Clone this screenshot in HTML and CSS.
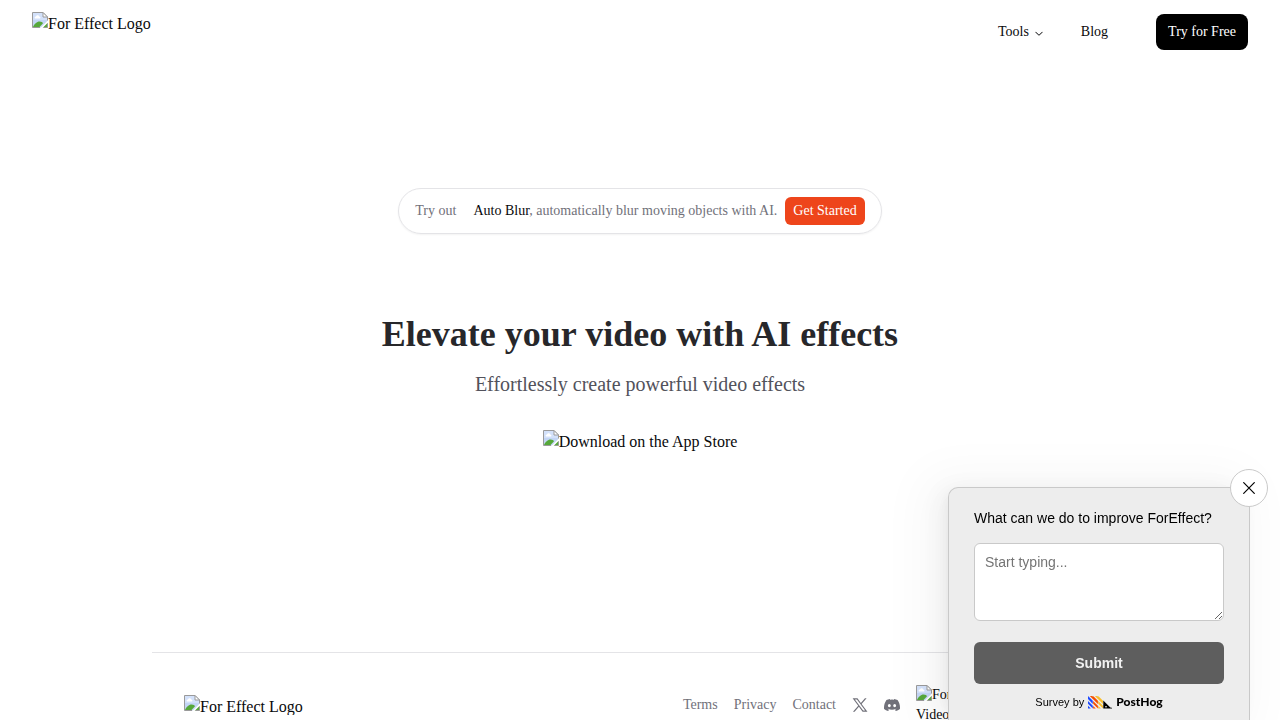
FILE: index.html
```html
<!DOCTYPE html>
<html lang="en">
<head>
<meta charset="utf-8">
<meta name="viewport" content="width=device-width, initial-scale=1">
<title>For Effect</title>
<link rel="stylesheet" href="styles.css">
</head>
<body>
<svg class="defs" width="0" height="0" aria-hidden="true">
  <symbol id="image-icon" viewBox="0 0 16 16">
    <path d="M.5 .5H11l4.500 4.500V9L9 15.500H.5z" fill="#c3d5f5"/>
    <path d="M1 1h10v4h4v3H1z" fill="#d3e1fa"/>
    <path d="M3 6.500c-1-1 0-2.300 1-2 .5-1.600 2.800-1.500 3.200 0 1.300 0 1.600 1.400.8 2z" fill="#fff"/>
    <path d="M1 15c1-3 4-5.500 6.500-5.500 2 0 3 .8 3.500 1.800L7.500 15z" fill="#56a83a"/>
    <path d="M10 15.500 15.500 10v5.500z" fill="#56a83a"/>
    <path d="M8.500 16 16 8.500v2L10.500 16z" fill="#fff"/>
    <path d="M8 15.500H.5V.5H11l4.500 4.500v3.500M15.500 11.500v4h-4" fill="none" stroke="#9a9a9a"/>
    <path d="M11 .5V5h4.500z" fill="#fff" stroke="#9a9a9a"/>
  </symbol>
</svg>
<div class="page">
  <header class="header">
    <a class="picture header-logo" href="#"><svg class="picture-icon"><use href="#image-icon"/></svg>For Effect Logo</a>
    <nav class="nav">
      <button class="nav-item" type="button">Tools
        <svg class="chevron" viewBox="0 0 15 15" fill="currentColor" aria-hidden="true"><path d="M3.135 6.158a.5.5 0 0 1 .707-.023L7.500 9.565l3.658-3.430a.5.5 0 0 1 .684.730l-4 3.750a.5.5 0 0 1-.684 0l-4-3.750a.5.5 0 0 1-.023-.707z"/></svg>
      </button>
      <a class="nav-item" href="#">Blog</a>
      <a class="try" href="#">Try for Free</a>
    </nav>
  </header>
  <main class="hero">
    <div class="promo">
      <span class="promo-lead">Try out</span>
      <span class="promo-text"><strong>Auto Blur</strong>, automatically blur moving objects with AI.</span>
      <a class="promo-button" href="#">Get Started</a>
    </div>
    <h1 class="title">Elevate your video with AI effects</h1>
    <p class="subtitle">Effortlessly create powerful video effects</p>
    <a class="picture" href="#"><svg class="picture-icon"><use href="#image-icon"/></svg>Download on the App Store</a>
  </main>
  <footer class="footer">
    <a class="picture footer-logo" href="#"><svg class="picture-icon"><use href="#image-icon"/></svg>For Effect Logo</a>
    <div class="links">
      <a href="#">Terms</a>
      <a href="#">Privacy</a>
      <a href="#">Contact</a>
      <a href="#" aria-label="X"><svg class="social" viewBox="0 0 24 24" fill="currentColor"><path fill-rule="evenodd" d="M.9 2h7.300l5.100 6.900L19.400 2h2.500l-7.500 8.500L23.200 22h-7.300l-5.500-7.400L3.900 22H1.400l7.900-9zM4.300 3.700 16.700 20.300h3L7.400 3.700z"/></svg></a>
      <a href="#" aria-label="Discord"><svg class="social" viewBox="0 0 24 24" fill="currentColor"><path d="M20.317 4.370a19.800 19.800 0 0 0-4.885-1.515.07.07 0 0 0-.079.037c-.21.375-.444.864-.608 1.250a18.300 18.300 0 0 0-5.487 0 12.600 12.600 0 0 0-.617-1.250.08.08 0 0 0-.079-.037A19.700 19.700 0 0 0 3.677 4.370C.533 9.046-.32 13.580.099 18.058a.08.08 0 0 0 .031.057 19.900 19.900 0 0 0 5.993 3.030.08.08 0 0 0 .084-.028c.462-.63.874-1.295 1.226-1.994a.08.08 0 0 0-.041-.106 13.100 13.100 0 0 1-1.872-.892.08.08 0 0 1-.008-.128c.126-.094.252-.192.372-.292a.07.07 0 0 1 .077-.01c3.928 1.793 8.180 1.793 12.062 0a.07.07 0 0 1 .078.010c.12.099.246.198.373.292a.08.08 0 0 1-.006.127 12.300 12.300 0 0 1-1.873.892.08.08 0 0 0-.041.107c.36.698.772 1.362 1.225 1.993a.08.08 0 0 0 .084.028 19.800 19.800 0 0 0 6.002-3.030.08.08 0 0 0 .032-.054c.5-5.177-.838-9.674-3.549-13.660zM8.020 15.330c-1.183 0-2.157-1.085-2.157-2.419 0-1.333.956-2.419 2.157-2.419 1.210 0 2.176 1.096 2.157 2.420 0 1.333-.956 2.418-2.157 2.418zm7.975 0c-1.183 0-2.157-1.085-2.157-2.419 0-1.333.955-2.419 2.157-2.419 1.210 0 2.176 1.096 2.157 2.420 0 1.333-.946 2.418-2.157 2.418z"/></svg></a>
      <a class="badge" href="#"><span class="picture"><svg class="picture-icon"><use href="#image-icon"/></svg>For Effect</span><span>Video</span></a>
    </div>
  </footer>
</div>
<form class="survey">
  <button class="close" type="button" aria-label="Close survey"><svg class="close-icon" viewBox="0 0 12 12" stroke="#000"><path d="M.7 .7l10.600 10.600M11.300 .7.7 11.300" stroke-width="1.200" stroke-linecap="round"/></svg></button>
  <label class="question" for="answer">What can we do to improve ForEffect?</label>
  <textarea class="answer" id="answer" placeholder="Start typing..."></textarea>
  <button class="submit" type="submit">Submit</button>
  <a class="branding" href="#">Survey by
    <svg class="hog" viewBox="0 0 24 14" aria-hidden="true">
      <path fill="#1d4aff" d="M0 10.800 2.800 13.600H0zM0 5.900l4.800 4.800v2.900L0 8.800zM0 .9l4.800 4.800v3.200L0 4.100z"/>
      <path fill="#f54e00" d="M5.100 10.900l2.700 2.700H5.100zM5.100 6l4.800 4.800v2.800L5.100 8.800zM5.100 1l4.800 4.800V9L5.100 4.200zM1.800.9h2.400l.9.900v2.400z"/>
      <path fill="#f9bd2b" d="M10.200 10.900l2.700 2.700h-2.700zM10.200 6l4.800 4.800v2.800l-4.800-4.800zM10.200 1l4.800 4.800V9l-4.800-4.800zM6.900.9h2.400l.9.900v2.400z"/>
      <path d="m21.800 11.900-6.500-6.500v8.200H24v-.9c-.8 0-1.600-.2-2.200-.8z"/>
      <circle cx="18" cy="11.700" r=".8" fill="#fff"/>
    </svg>
    <span class="wordmark">PostHog</span>
  </a>
</form>
</body>
</html>
```
FILE: styles.css
```css
* { box-sizing: border-box; }
body {
  margin: 0;
  height: 100vh;
  overflow: hidden;
  background: #fff;
  color: #09090b;
  font: 16px/24px "Liberation Serif", serif;
}
a { color: inherit; text-decoration: none; }
button { font: inherit; color: inherit; border: 0; background: none; padding: 0; cursor: pointer; }
.defs { position: absolute; }

.header { display: flex; justify-content: space-between; height: 64px; padding: 0 32px; }
.picture { display: flex; align-items: flex-start; white-space: nowrap; }
.picture-icon { width: 16px; height: 16px; flex: none; }
.header-logo { align-self: center; height: 40px; }
.nav { display: flex; align-items: center; font-size: 14px; line-height: 20px; }
.nav-item { display: flex; align-items: center; gap: 4px; margin-right: 36px; }
.nav-item + .nav-item { margin-right: 48px; }
.chevron { width: 12px; height: 12px; margin-top: 2px; }
.try { padding: 8px 12px; border-radius: 8px; background: #000; color: #fff; }

.hero { display: flex; flex-direction: column; align-items: center; min-height: 588px; padding: 124px 32px 0; }
.promo {
  display: flex;
  align-items: center;
  gap: 8px;
  padding: 8px 16px;
  border: 1px solid #e4e4e7;
  border-radius: 24px;
  box-shadow: 0 1px 2px rgba(0, 0, 0, .05);
  color: #71717a;
  font-size: 14px;
  line-height: 20px;
}
.promo-lead { margin-right: 9px; }
.promo strong { font-weight: 400; color: #09090b; }
.promo-button { padding: 4px 8px; border-radius: 6px; background: #ee451b; color: #fff; }
.title { margin: 80px 0 16px; color: #27272a; font-size: 36px; line-height: 40px; }
.subtitle { margin: 0 0 32px; color: #52525b; font-size: 20px; line-height: 28px; }

.footer {
  display: flex;
  align-items: center;
  justify-content: space-between;
  max-width: 976px;
  margin: 0 auto;
  padding: 32px;
  border-top: 1px solid #e4e4e7;
}
.footer-logo { height: 20px; overflow: hidden; }
.links { display: flex; align-items: center; gap: 16px; color: #71717a; font-size: 14px; line-height: 20px; }
.social { display: block; width: 16px; height: 16px; }
.badge { width: 180px; height: 40px; color: #09090b; }

.survey {
  position: fixed;
  right: 30px;
  bottom: 0;
  display: flex;
  flex-direction: column;
  width: 302px;
  padding: 20px 25px 8px;
  border: 1px solid #c9c9c9;
  border-bottom: 0;
  border-radius: 10px 10px 0 0;
  background: #ededed;
  box-shadow: -6px 0 16px -8px rgba(0, 0, 0, .08), -9px 0 28px rgba(0, 0, 0, .05), -12px 0 48px 16px rgba(0, 0, 0, .03);
  color: #000;
  font: 14px/20px "Liberation Sans", sans-serif;
}
.close {
  position: absolute;
  top: -19px;
  right: -19px;
  display: flex;
  align-items: center;
  justify-content: center;
  width: 38px;
  height: 38px;
  border: 1px solid #c9c9c9;
  border-radius: 50%;
  background: #fff;
}
.close-icon { width: 12px; height: 12px; }
.question { margin-bottom: 15px; }
.answer {
  height: 78px;
  padding: 8px 10px;
  border: 1px solid #c9c9c9;
  border-radius: 6px;
  background: #fff;
  font: inherit;
}
.answer::placeholder { color: #757575; }
.submit { margin: 21px 0 8px; padding: 11px; border-radius: 6px; background: #5e5e5e; color: #f2f2f2; font-weight: 700; }
.branding { display: flex; align-items: center; justify-content: center; gap: 4px; font-size: 11px; }
.hog { width: 24px; height: 14px; }
.wordmark { font: 900 12px/20px Lato, sans-serif; }
```
